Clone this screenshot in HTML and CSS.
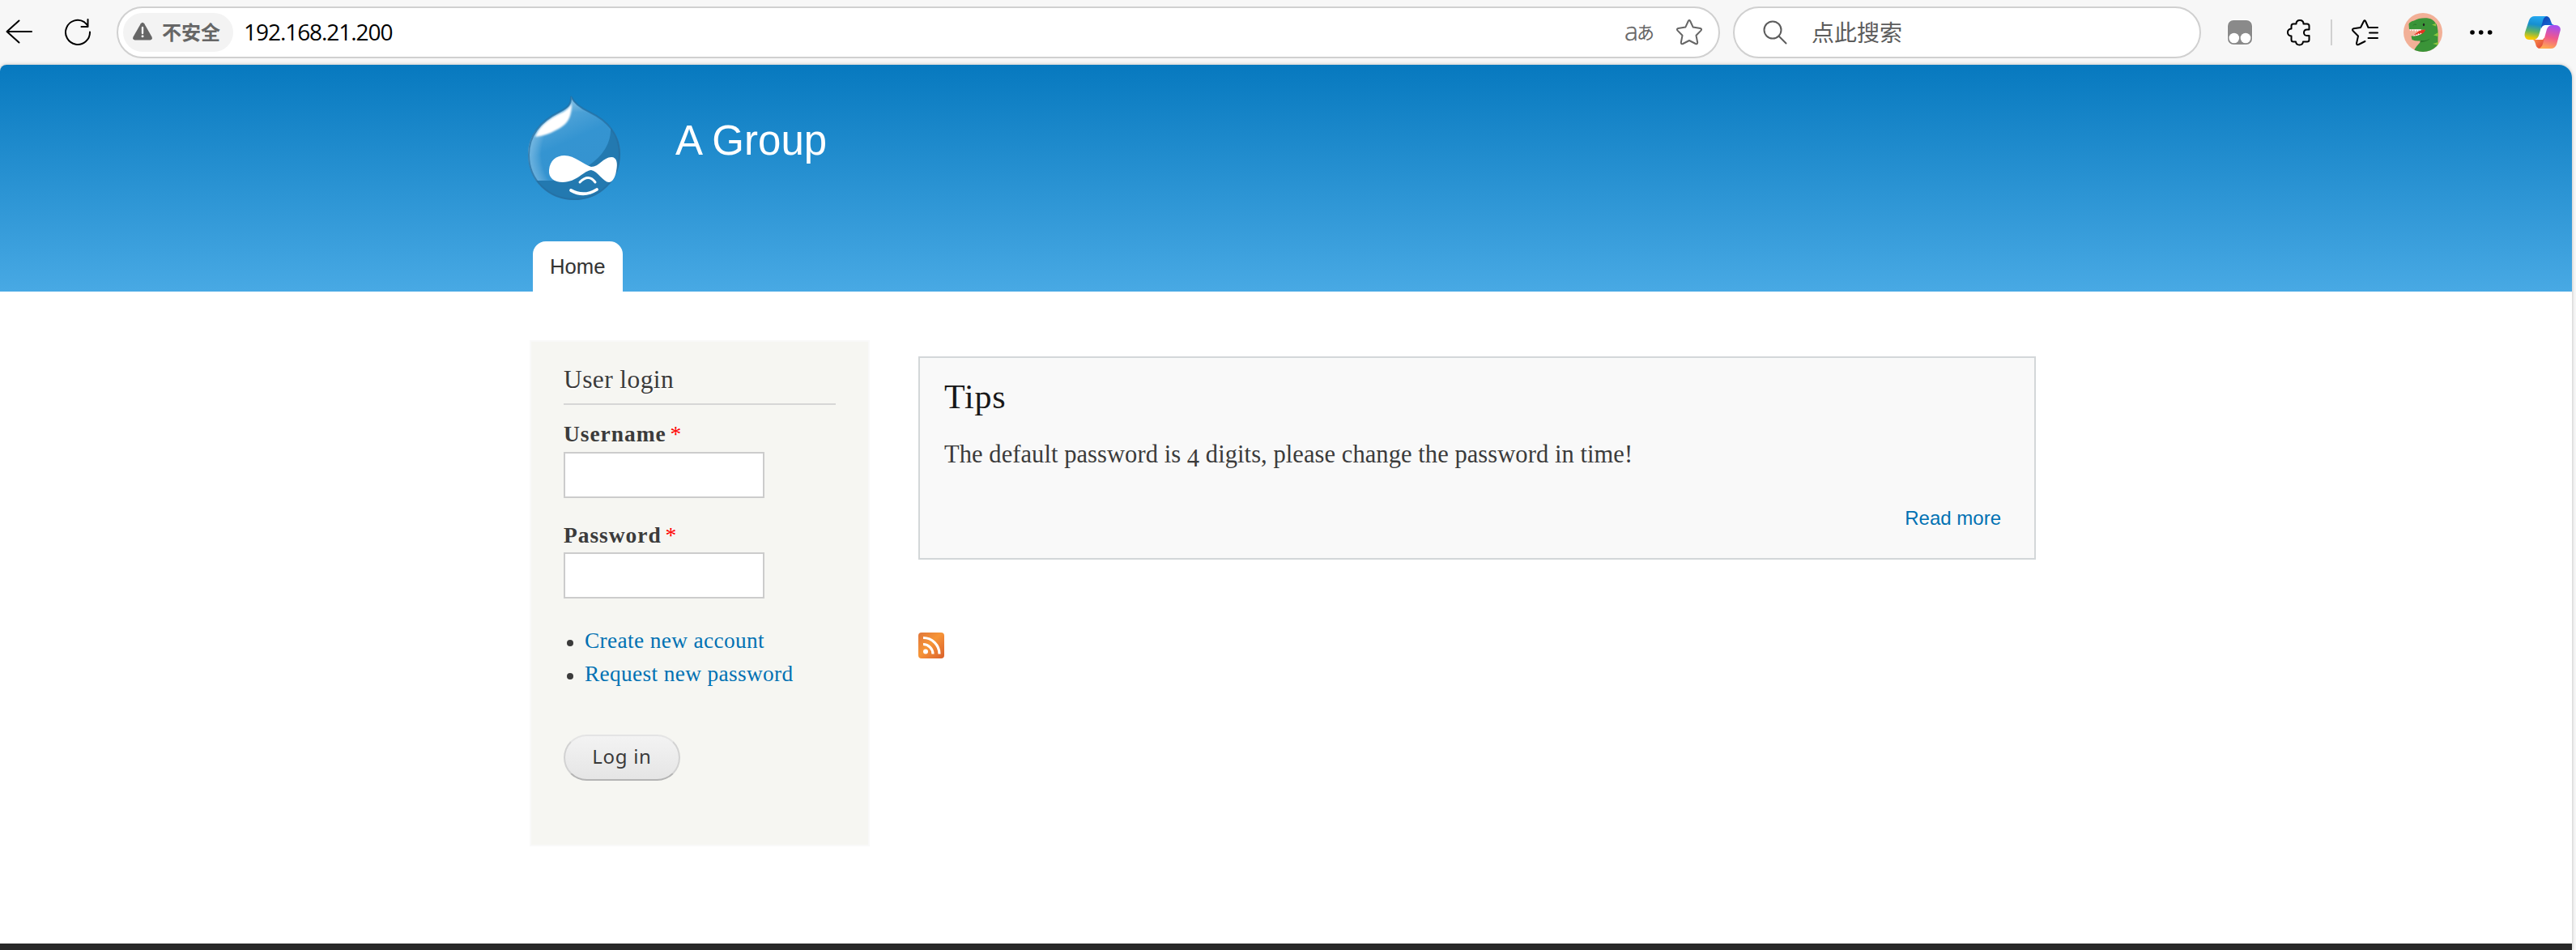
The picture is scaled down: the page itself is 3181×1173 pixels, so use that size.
FILE: index.html
```html
<!DOCTYPE html>
<html lang="en">
<head>
<meta charset="utf-8">
<title>A Group</title>
<link rel="stylesheet" href="styles.css">
</head>
<body>
<div class="toolbar">
  <svg class="icon back" width="34" height="32" viewBox="0 0 34 32"><path d="M16.500 1.500 1.500 15 16.500 28.500M1.500 15H32"/></svg>
  <svg class="icon reload" width="34" height="34" viewBox="0 0 34 34"><path d="M32 16.500A15 15 0 1 1 25 4.200Q27.500 6 29.500 9M29.500 1V10H21.500"/></svg>
  <div class="address">
    <div class="chip">
      <svg width="26" height="24" viewBox="0 0 26 24"><path d="M10.800 2.200Q13-.8 15.200 2.200L24.500 18.500Q25.800 22 22.500 22.500H3.500Q.2 22 1.500 18.500Z" fill="#666"/><path d="M13 7v7" stroke="#f3f3f3" stroke-width="2.400" stroke-linecap="round"/><circle cx="13" cy="17.800" r="1.500" fill="#f3f3f3"/></svg>
      <span>不安全</span>
    </div>
    <span class="url">192.168.21.200</span>
    <span class="translate"><span class="latin">a</span><span class="kana">あ</span></span>
    <svg class="icon star" width="34" height="34" viewBox="0 0 34 34"><path d="M15.800 3Q17 1 18.200 3L21.700 10.600 30.700 12Q33 12.800 31.500 14.600L25.500 20.800 27.200 29.500Q27 32 24.800 31L17 27 9.200 31Q7 32 6.800 29.500L8.500 20.800 2.500 14.600Q1 12.800 3.300 12L12.300 10.600Z"/></svg>
  </div>
  <div class="search">
    <svg class="icon" width="30" height="30" viewBox="0 0 30 30"><circle cx="12" cy="12" r="10.500"/><path d="M19.500 19.500 28.500 28.500"/></svg>
    <span>点此搜索</span>
  </div>
  <svg class="ext" width="32" height="32" viewBox="0 0 32 32"><rect x="0" y="0" width="32" height="32" rx="8" fill="#fff"/><rect x="1" y="1" width="30" height="30" rx="7" fill="#8a8a8a"/><circle cx="8.800" cy="23" r="6.300" fill="#fff"/><circle cx="23" cy="23" r="6.300" fill="#fff"/></svg>
  <svg class="icon puzzle" width="32" height="34" viewBox="0 0 32 34"><path d="M9 6.500H12.500Q12.500 2 17 2T21.500 6.500H26Q28.500 6.500 28.500 9V13.500H26Q22 13.500 22 17.300T26 21H28.500V26Q28.500 28.500 26 28.500H21Q20.500 32.500 16.500 32.500T12 28.500H9Q6.500 28.500 6.500 26V21.500Q2 21 2 17T6.500 12.500V9Q6.500 6.500 9 6.500Z"/></svg>
  <i class="divider"></i>
  <svg class="icon favs" width="34" height="34" viewBox="0 0 34 34"><path d="M17.500 28 9.500 32Q7 33 7 30.500L9 21.500 2.500 15Q1 13 3.500 12.200L12 11 16 3Q17 1.500 18 3L21.500 11H33M23 17.500H33M21.500 24H33"/></svg>
  <svg class="avatar" width="48" height="48" viewBox="0 0 48 48"><defs><clipPath id="round"><circle cx="24" cy="24" r="24"/></clipPath></defs><g clip-path="url(#round)"><path fill="#f2b097" d="M0 0h48v48H0z"/><path fill="#3a9438" d="M6.500 14Q7 11 13 9.500C18 6 30 5 35 8Q42 12 42.500 22V48H12Q16 40 23 34Q16 35.500 10.500 33L9.500 28.500Q19 29 27 21Q17 20 7 20.500Z"/><path d="M12 27.500 17 24 20.500 21.500 27 20.500Q26 25 21 26.500L14 28.500Z" fill="#e53320"/><path d="m7 20.300 1.500 2 1.500-2 1.500 2.500 1.500-2.500 1.500 3 1.500-2.500 1.500 2 1.500-2 1.500 1.500 1.500-2ZM12 28.500l1-2 1.500 1.500 1-2 1.500 1.500 1-2.500 2 1.500 1-2 1.500 1Q18 28.500 12 28.500" fill="#fff"/><path d="M21 34Q29 34.500 33 31.500Q30 35.500 20 36.500Z" fill="#287529"/><ellipse cx="25" cy="14.500" rx="1.200" ry="1.800" fill="#222"/><path d="M12 15.500q1-2.500 4-1" stroke="#287529" fill="none"/><path d="M35 14.500l5-1.500v3.500ZM37 27.500l6-3.500v5ZM36 38l7-2v4Z" fill="#8dc63f"/></g></svg>
  <svg class="dots" width="28" height="8" viewBox="0 0 28 8"><circle cx="3" cy="4" r="2.800"/><circle cx="13.700" cy="4" r="2.800"/><circle cx="24.700" cy="4" r="2.800"/></svg>
  <svg class="copilot" width="46" height="42" viewBox="0 0 46 42">
    <defs>
      <linearGradient id="cool" x1=".5" y1="0" x2=".35" y2="1"><stop offset="0" stop-color="#25a8f0"/><stop offset=".35" stop-color="#168fd0"/><stop offset=".65" stop-color="#5eb364"/><stop offset=".95" stop-color="#f5ca00"/></linearGradient>
      <linearGradient id="warm" x1=".5" y1="0" x2=".3" y2="1"><stop offset="0" stop-color="#a64df0"/><stop offset=".5" stop-color="#f0588c"/><stop offset="1" stop-color="#ffad4e"/></linearGradient>
      <linearGradient id="navy" x1="0" y1="0" x2="1" y2="1"><stop offset="0" stop-color="#103cad"/><stop offset="1" stop-color="#1b7fe9"/></linearGradient>
      <linearGradient id="ember" x1="0" y1="0" x2="1" y2="1"><stop offset="0" stop-color="#ffa04d"/><stop offset="1" stop-color="#dd3835"/></linearGradient>
    </defs>
    <path fill="url(#navy)" d="M20 1H27Q31 1 32.500 6L34 10Q35 12 39 12H27Q23 12 21 18Z"/>
    <path fill="url(#ember)" d="M11 30Q13 31 14 35Q15 41 20 41H24L26 28 20 26Z"/>
    <path fill="#fff" d="M27 12H36L23 30H10Q16 30 18 25L21.500 15Q23 12 27 12Z"/>
    <path fill="url(#cool)" d="M13 1H28Q24 2 23 7L18 25Q16 30 11 30H6Q-1 29 1 21L6 6Q8 1 13 1Z"/>
    <path fill="url(#warm)" d="M33 41H18Q22 39 23 35L28 17Q30 12 35 12H39Q47 13 44 21L40 36Q38 41 33 41Z"/>
  </svg>
</div>

<div class="page">
  <header>
    <div class="brand">
      <svg width="116" height="132" viewBox="0 0 116 132">
        <defs>
          <linearGradient id="drop" x1=".2" y1="0" x2=".6" y2="1"><stop offset="0" stop-color="#69b1de"/><stop offset=".45" stop-color="#3494d1"/><stop offset="1" stop-color="#3793cf"/></linearGradient>
          <radialGradient id="rim" cx=".54" cy=".55" r=".55"><stop offset=".72" stop-color="#fff" stop-opacity="0"/><stop offset="1" stop-color="#b6dcf2" stop-opacity=".45"/></radialGradient>
          <clipPath id="body"><path d="M53 1C57 10 66 16 77 21C98 31 114 48 114 72C114 105 88 129 57 129S0 105 0 73C0 47 17 31 39 20C49 15 54 11 53 1Z"/></clipPath>
          <filter id="soft"><feGaussianBlur stdDeviation="1.300"/></filter>
        </defs>
        <g clip-path="url(#body)">
          <path fill="url(#drop)" d="M0 0h116v132H0z"/>
          <path fill="url(#rim)" d="M0 0h116v132H0z"/>
          <path fill="#2379b0" d="M102 38Q104 67 74 87Q55 106 24 105H5Q22 132 58 132Q116 125 116 72Q116 54 102 38Z"/>
          <path fill="#fff" filter="url(#soft)" d="M54 9C54 26 50 35 36 42Q22 50 9 51C15 34 33 25 44 20Q52 15 54 9Z"/>
        </g>
        <path fill="none" stroke="#266fa2" stroke-opacity=".75" stroke-width="2" d="M53 1C57 10 66 16 77 21C98 31 113 48 113 72C113 105 88 128 57 128S1 105 1 73C1 47 17 31 39 20C49 15 54 11 53 1Z"/>
        <path fill="#fff" d="M45 74C58 74 68 85 78 88C88 88 93 76 103 76C110 76 111 84 109 93C108 101 104 107 100 107C93 107 86 93 78 92C70 92 60 107 43 107C32 107 25 101 26 92C27 80 35 74 45 74Z"/>
        <g fill="none" stroke="#fff" stroke-linecap="round"><path stroke-width="3" d="M64 107Q75 96 83 107"/><path stroke-width="3.800" d="M53 117Q69 126 85 116"/></g>
      </svg>
      <h1>A Group</h1>
    </div>
    <nav><a>Home</a></nav>
  </header>

  <div class="columns">
    <aside>
      <h2>User login</h2>
      <div class="field"><label>Username <em>*</em></label><input type="text"></div>
      <div class="field"><label>Password <em>*</em></label><input type="password"></div>
      <ul><li><a>Create new account</a></li><li><a>Request new password</a></li></ul>
      <button>Log in</button>
    </aside>
    <main>
      <article>
        <h2>Tips</h2>
        <p>The default password is <span class="oldstyle">4</span> digits, please change the password in time!</p>
        <a>Read more</a>
      </article>
      <svg class="feed" width="32" height="32" viewBox="0 0 32 32"><defs><linearGradient id="rss" x1="0" y1="0" x2="1" y2="1"><stop offset="0" stop-color="#e0763a"/><stop offset=".45" stop-color="#f69537"/><stop offset=".6" stop-color="#ef8635"/><stop offset="1" stop-color="#d95f2b"/></linearGradient></defs><rect width="32" height="32" rx="4" fill="url(#rss)"/><circle cx="9" cy="23.500" r="3" fill="#fff"/><path d="M6 14.500A12 12 0 0 1 18 26.500M6 6.500A20 20 0 0 1 26 26.500" fill="none" stroke="#fff" stroke-width="3.200"/></svg>
    </main>
  </div>
  <footer></footer>
</div>
</body>
</html>
```
FILE: styles.css
```css
* { box-sizing: border-box; }
body { margin: 0; height: 1173px; overflow: hidden; background: #f7f7f7; color: #3b3b3b; font-family: "Liberation Serif", serif; }
h1, h2, p, ul { margin: 0; padding: 0; font-weight: normal; }
svg { display: block; flex: none; }

/* Browser toolbar */
.toolbar { height: 80px; display: flex; align-items: center; padding-left: 7px; font-family: "Noto Sans", "Noto Sans CJK SC", sans-serif; }
.icon { fill: none; stroke: #000; stroke-width: 2; stroke-linejoin: round; stroke-linecap: round; }
.reload { margin-left: 38px; }
.address { width: 1980px; height: 64px; margin-left: 31px; padding: 0 19px 0 6px; display: flex; align-items: center; background: #fff; border: 2px solid #d0d0d0; border-radius: 32px; }
.chip { width: 136px; height: 48px; padding: 0 0 2px 11px; display: flex; align-items: center; gap: 11px; background: #f3f3f3; border-radius: 24px; color: #666; font: bold 24px/46px "Noto Sans CJK SC", sans-serif; }
.url { margin-left: 13px; color: #000; font: 28px/58px "Open Sans", sans-serif; letter-spacing: -1.050px; height: 60px; }
.translate { margin-left: auto; display: flex; align-items: center; color: #666; height: 60px; }
.latin { height: 60px; font: 32px/56px "Open Sans", sans-serif; font-weight: 300; -webkit-text-stroke: .4px #666; }
.kana { height: 60px; font: 22px/56px "Noto Sans CJK JP", sans-serif; margin-left: -2px; }
.star { margin-left: 26px; stroke: #666; }
.search { width: 578px; height: 64px; margin-left: 16px; padding-left: 35px; display: flex; align-items: center; gap: 30px; background: #fff; border: 2px solid #d0d0d0; border-radius: 32px; color: #5c5c5c; font: 28px/60px "Noto Sans CJK SC", sans-serif; }
.search span { height: 60px; line-height: 58px; }
.search .icon { stroke: #5c5c5c; }
.ext { margin-left: 32px; }
.puzzle { margin-left: 41px; }
.divider { width: 2px; height: 32px; margin-left: 23px; background: #d0d0d0; }
.favs { margin-left: 23px; }
.avatar { margin-left: 31px; }
.dots { margin-left: 34px; }
.copilot { margin-left: 39px; }

/* Web page */
.page { width: 3176px; height: 1093px; display: flex; flex-direction: column; background: #fff; border-radius: 8px 16px 0 0; overflow: hidden; box-shadow: 0 0 4px rgba(0,0,0,.25); }
header { height: 280px; padding: 38px 0 0 652px; display: flex; flex-direction: column; justify-content: space-between; background: linear-gradient(#0779bf, #48a9e4); font-family: "Liberation Sans", sans-serif; }
.brand { display: flex; gap: 66px; }
h1 { margin-top: 26px; font-size: 51px; line-height: 60px; color: #fff; }
nav { display: flex; padding-left: 6px; }
nav a { width: 111px; height: 62px; padding-left: 21px; border-radius: 16px 16px 0 0; background: #fff; color: #333; font-size: 25.700px; line-height: 62px; text-shadow: 0 2px 2px #eee; }
.columns { flex: 1; display: flex; align-items: flex-start; gap: 60px; padding: 60px 0 0 654px; }
aside { width: 420px; height: 625px; padding: 27px 40px 0; background: #f6f6f2; border: 2px solid #f9f9f9; }
aside h2 { height: 51px; border-bottom: 2px solid #d6d6d6; margin-bottom: 16px; font-size: 31.500px; line-height: 40px; letter-spacing: .4px; text-shadow: 0 2px 0 #fff; }
label { display: block; margin-bottom: 2px; font-size: 27.500px; font-weight: bold; line-height: 40px; letter-spacing: .95px; }
label em { margin-left: -3px; font-style: normal; font-weight: normal; color: #f00; }
input { display: block; width: 248px; height: 57px; border: 2px solid #ccc; background: #fff; }
.field + .field { margin-top: 26px; }
.field + .field label { margin-bottom: 1px; }
ul { margin-top: 32px; list-style: none; }
li { display: flex; align-items: center; gap: 14px; padding-left: 4px; height: 41px; font-size: 27.300px; line-height: 41px; letter-spacing: .37px; }
li::before { content: ""; width: 8px; height: 8px; margin-top: 4px; border-radius: 50%; background: #3b3b3b; }
a { color: #0071b3; }
button { width: 144px; height: 57px; margin: 54px 0 0; padding: 0 0 3px; border: 2px solid; border-color: #e4e4e4 #d2d2d2 #b4b4b4; border-radius: 29px; background: linear-gradient(#f3f3f3, #e5e5e5); color: #3a3a3a; font: 24px/50px "Noto Sans", sans-serif; letter-spacing: .7px; }
main { padding-top: 20px; }
article { width: 1380px; height: 251px; padding: 23px 41px 0 30px; display: flex; flex-direction: column; background: #f9f9f9; border: 2px solid #d3d7d9; }
article h2 { color: #181818; font-size: 42px; line-height: 50px; letter-spacing: .8px; }
article p { margin-top: 23px; font-size: 30.500px; line-height: 46px; letter-spacing: .07px; }
.oldstyle { vertical-align: -5px; line-height: 0; }
article a { margin-top: 38px; align-self: flex-end; font: 24px/36px "Liberation Sans", sans-serif; }
.feed { margin-top: 90px; }
footer { height: 8px; background: #292929; }
```
